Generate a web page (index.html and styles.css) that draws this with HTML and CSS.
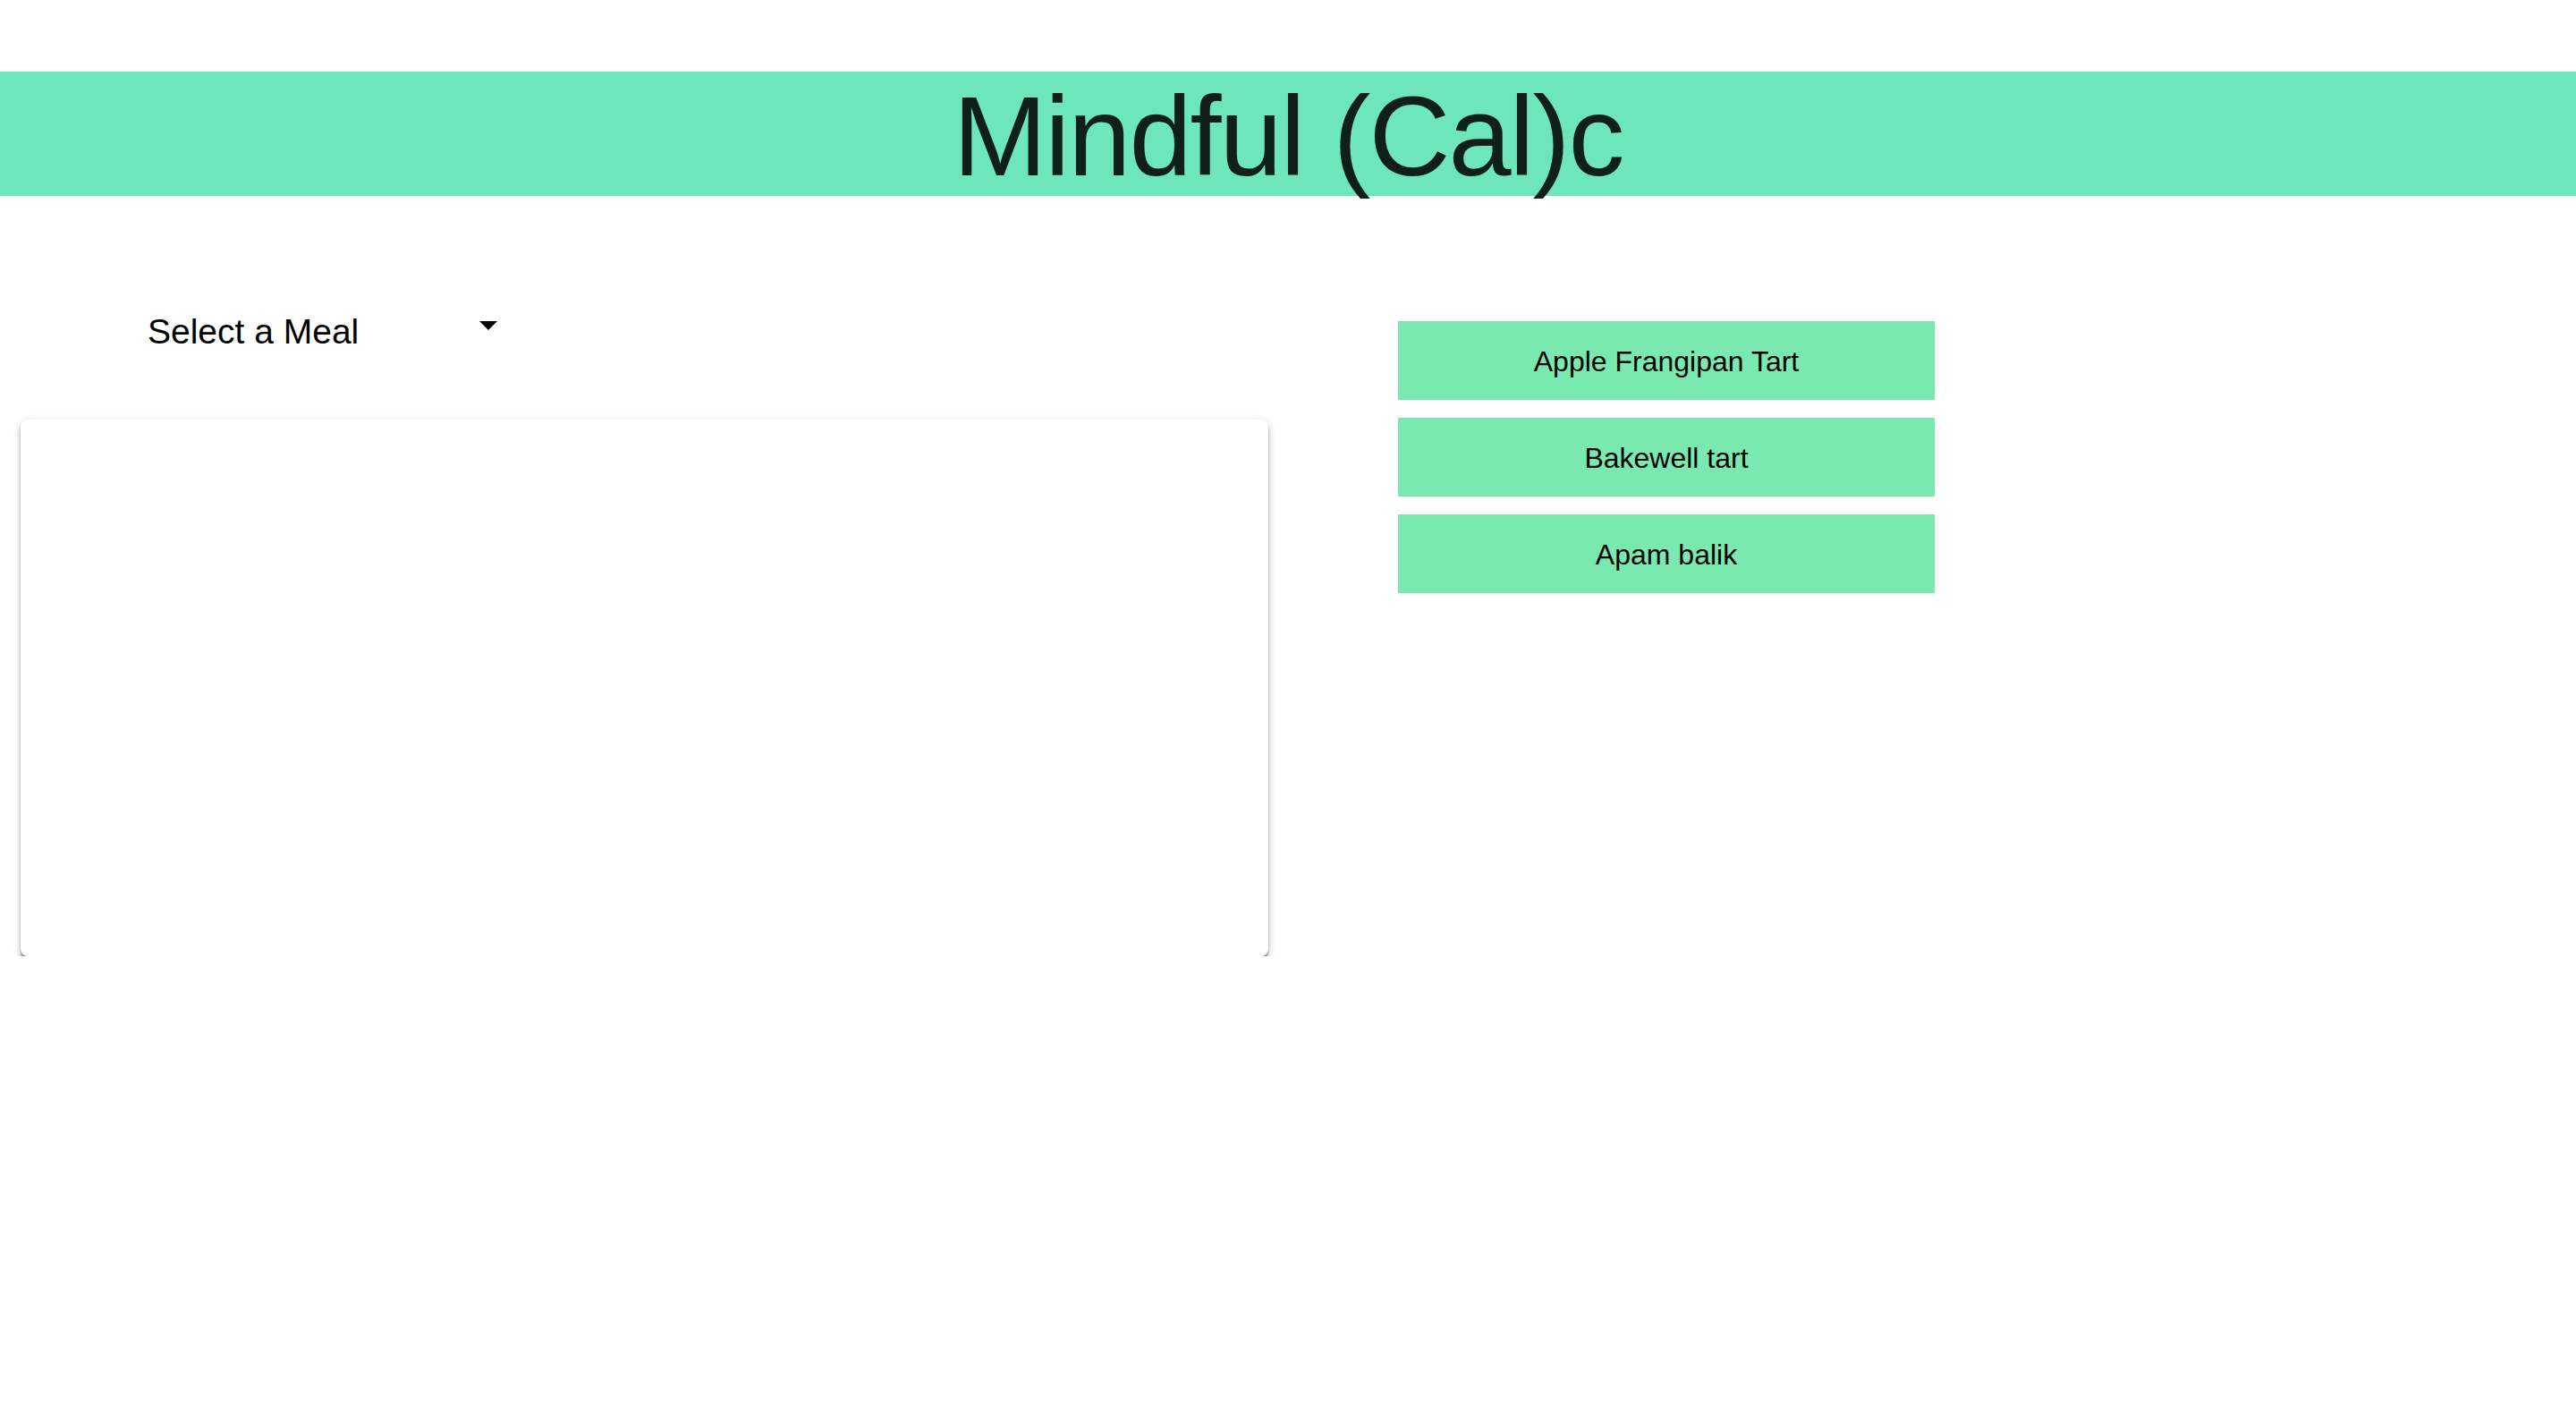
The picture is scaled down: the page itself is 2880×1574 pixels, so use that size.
FILE: index.html
```html
<!DOCTYPE html>
<html lang="en">
<head>
<meta charset="utf-8">
<title>Mindful (Cal)c</title>
<link rel="stylesheet" href="styles.css">
</head>
<body>
<header class="app-header">
  <h1 class="title">Mindful (Cal)c</h1>
</header>
<main class="layout">
  <section class="left">
    <div class="meal-select">
      <span class="select-label">Select a Meal</span>
      <svg class="select-arrow" viewBox="0 0 24 24" width="48" height="48"><path d="M7 10l5 5 5-5z" fill="#000"/></svg>
    </div>
    <div class="card"></div>
  </section>
  <section class="right">
    <button class="meal-btn">Apple Frangipan Tart</button>
    <button class="meal-btn">Bakewell tart</button>
    <button class="meal-btn">Apam balik</button>
  </section>
</main>
</body>
</html>
```
FILE: styles.css
```css
html, body {
  margin: 0;
  padding: 0;
  background: #ffffff;
  font-family: "Liberation Sans", Arial, sans-serif;
}

.app-header {
  margin-top: 80px;
  height: 139px;
  box-sizing: border-box;
  padding-top: 6px;
  background: #6ee6bc;
  text-align: center;
}

.title {
  margin: 0;
  font-size: 126px;
  font-weight: 400;
  line-height: 133px;
  letter-spacing: -2px;
  color: #0f1f19;
}

.layout {
  display: flex;
  align-items: flex-start;
}

.left {
  padding-left: 23px;
  padding-top: 120px;
  width: 1395px;
}

.meal-select {
  display: flex;
  align-items: flex-start;
  height: 48px;
  padding-left: 142px;
}

.select-label {
  display: block;
  width: 357px;
  margin-top: 10px;
  font-size: 39px;
  line-height: 44px;
  color: #000;
}

.select-arrow {
  display: block;
}

.card {
  margin-top: 82px;
  width: 1395px;
  height: 600px;
  background: #fff;
  border-radius: 8px;
  box-shadow: 0 4px 2px 0 rgba(0,0,0,0.32), 0 6px 8px 0 rgba(0,0,0,0.12), 0 2px 10px 0 rgba(0,0,0,0.14);
}

.right {
  margin-left: 145px;
  padding-top: 140px;
  display: flex;
  flex-direction: column;
  gap: 20px;
}

.meal-btn {
  width: 600px;
  height: 88px;
  box-sizing: border-box;
  padding: 2px 0 0;
  border: none;
  border-radius: 0;
  background: #7ae9b0;
  font-family: "Liberation Sans", Arial, sans-serif;
  font-size: 32px;
  line-height: 32px;
  color: #000;
  text-align: center;
  cursor: pointer;
}
```
